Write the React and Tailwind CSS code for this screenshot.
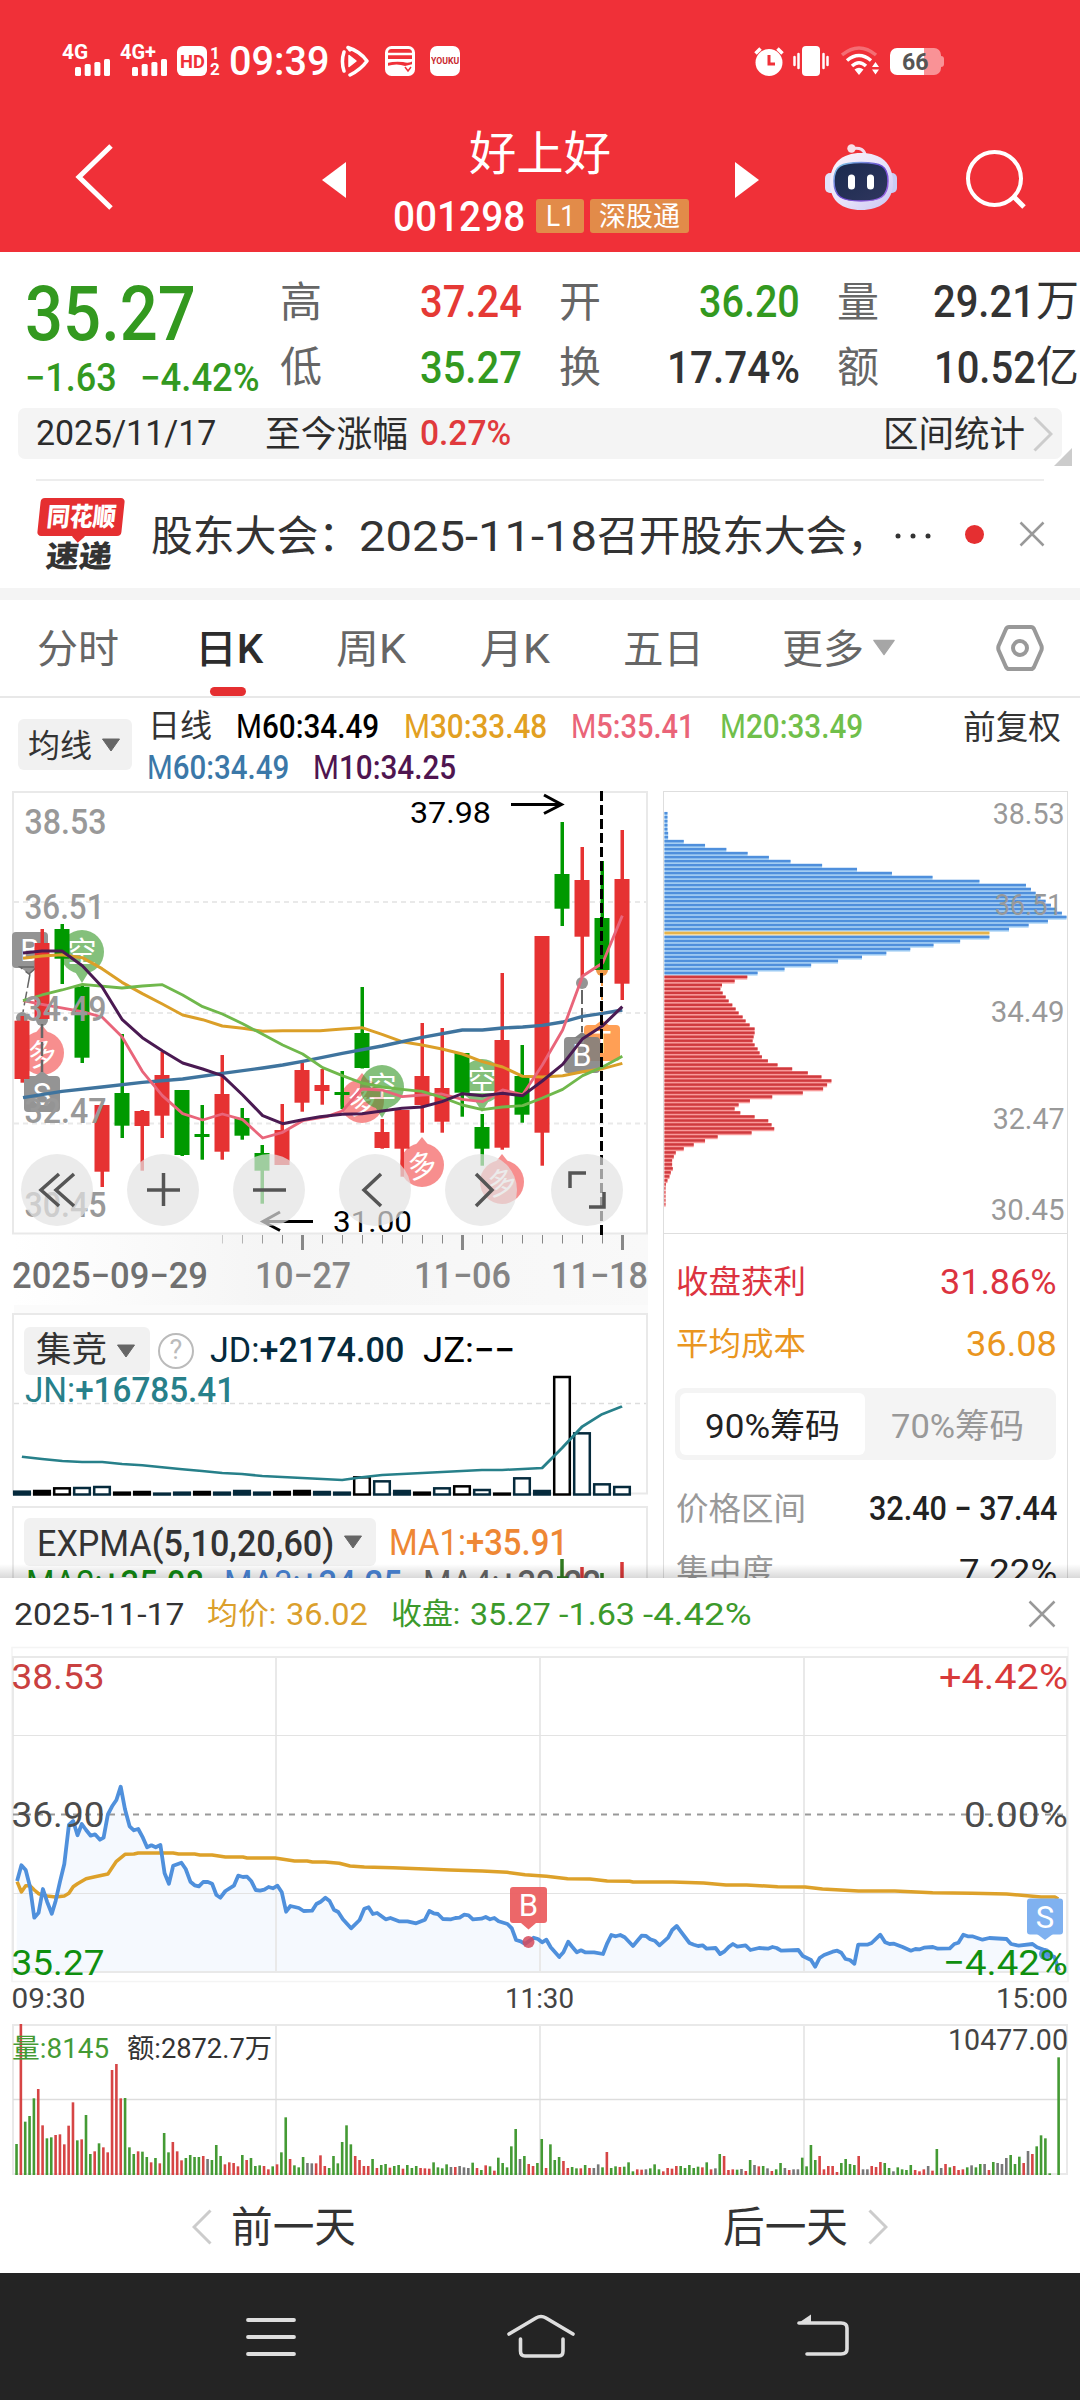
import { useLayoutEffect, useRef } from "react";

/* Text squeezed or widened horizontally to fill the width its class gives. */
function Fit({ className = "", children }) {
  const box = useRef(null);
  const ink = useRef(null);
  useLayoutEffect(() => {
    const k = box.current.clientWidth / ink.current.offsetWidth;
    ink.current.style.transform = `scaleX(${k})`;
  }, []);
  return (
    <span ref={box} className={`block shrink-0 whitespace-nowrap leading-none ${className}`}>
      <span ref={ink} className="inline-block origin-left">{children}</span>
    </span>
  );
}

/* A thin indicator name followed by its stronger figure. */
function Reading({ className = "", name, value }) {
  return (
    <Fit className={className}>{name}<span className="font-medium">{value}</span></Fit>
  );
}

function Txt({ x, y, w, s = 35, fill = "#999", weight = 400, end = false, children }) {
  return (
    <text x={x} y={y} fontSize={s} fill={fill} fontWeight={weight} textLength={w} lengthAdjust="spacingAndGlyphs" textAnchor={end ? "end" : "start"}>
      {children}
    </text>
  );
}

function Caret({ className = "" }) {
  return (
    <svg viewBox="0 0 20 14" className={`shrink-0 ${className}`}>
      <path d="M1.500 1H18.500L10 13Z" fill="currentColor" stroke="currentColor" strokeWidth="1" strokeLinejoin="round" />
    </svg>
  );
}

function Signal() {
  return (
    <svg viewBox="0 0 36 17" className="h-[17px] w-[36px]" fill="#fff">
      <rect x="0" y="8" width="6" height="9" rx="1.500" />
      <rect x="9.700" y="5" width="6" height="12" rx="1.500" />
      <rect x="19.400" y="3" width="6" height="14" rx="1.500" />
      <rect x="29" y="0" width="6" height="17" rx="1.500" />
    </svg>
  );
}

function StatusBar() {
  return (
    <div className="flex h-[120px] items-start pl-[62px] pt-[42px] text-white">
      <div className="flex w-[58px] flex-col">
        <Fit className="w-[26px] text-[20px] font-bold">4G</Fit>
        <div className="-mt-[3px] ml-[13px]"><Signal /></div>
      </div>
      <div className="flex w-[57px] flex-col">
        <Fit className="w-[36px] text-[20px] font-bold">4G+</Fit>
        <div className="-mt-[3px] ml-[12px]"><Signal /></div>
      </div>
      <div className="mt-[4px] flex h-[30px] w-[30px] items-center justify-center rounded-[6px] bg-white text-[#f03038]">
        <Fit className="w-[25px] text-[19px] font-bold">HD</Fit>
      </div>
      <div className="ml-[2px] mt-[3px] flex w-[12px] flex-col items-center text-[17px] font-bold leading-[16px]">
        <span>1</span>
        <span>2</span>
      </div>
      <Fit className="ml-[8px] w-[100px] text-[40px] font-medium">09:39</Fit>
      <svg viewBox="0 0 30 32" className="ml-[11px] mt-[3px] h-[32px] w-[30px]" fill="none" stroke="#fff" strokeWidth="3.500" strokeLinecap="round" strokeLinejoin="round">
        <path d="M4 7C2 13 2 20 4 26M8 2.500C16 5 22 9 27 16C22 23 16 27 10 30M8 2.500L10 5" />
        <path d="M9 10.500L16 16L9 21.500Z" fill="#fff" strokeWidth="1.500" />
      </svg>
      <svg viewBox="0 0 30 30" className="ml-[15px] mt-[4px] h-[30px] w-[30px]" fill="none" stroke="#fff" strokeWidth="3">
        <rect x="1.500" y="1.500" width="27" height="27" rx="5" />
        <path d="M2 8H28" strokeWidth="2.500" />
        <path d="M2 13H28V15Q24 18 18 16Q10 15 2 17Z" fill="#fff" stroke="none" />
        <path d="M2 20Q12 17 20 20L28 18V28H3Z" fill="#fff" stroke="none" />
        <path d="M20 21L23 25L26 21" stroke="#f03038" strokeWidth="1.500" />
      </svg>
      <div className="ml-[15px] mt-[4px] flex h-[30px] w-[30px] items-center justify-center rounded-[7px] bg-white text-[#c9292f]">
        <Fit className="w-[28px] text-[9px] font-bold">YOUKU</Fit>
      </div>
      <svg viewBox="0 0 30 32" className="ml-[294px] mt-[3px] h-[32px] w-[30px]">
        <circle cx="15" cy="17.500" r="13.500" fill="#fff" />
        <path d="M1.500 8.500L6.500 3.500M28.500 8.500L23.500 3.500" stroke="#fff" strokeWidth="3.500" fill="none" />
        <path d="M15 10V19H21" stroke="#f03038" strokeWidth="3" fill="none" />
      </svg>
      <svg viewBox="0 0 36 32" className="ml-[9px] mt-[3px] h-[32px] w-[36px]" stroke="#fff" strokeWidth="2.500" strokeLinecap="round">
        <rect x="9" y="1" width="18" height="30" rx="4" fill="#fff" stroke="none" />
        <path d="M5.500 9V23M1.500 12V20M30.500 9V23M34.500 12V20" />
      </svg>
      <svg viewBox="0 0 40 30" className="ml-[12px] mt-[4px] h-[30px] w-[40px]" fill="none" stroke="#fff" strokeWidth="3.500">
        <path d="M1 9Q18 -5 35 9" opacity=".3" />
        <path d="M6 14.500Q18 4.500 30 14.500" />
        <path d="M11 20Q18 13.500 25 20" />
        <path d="M13.500 23.500Q18 20 22.500 23.500L18 29Z" fill="#fff" stroke="none" />
        <path d="M31 21L34.500 16L38 21ZM31 23.500L34.500 28.500L38 23.500Z" fill="#fff" stroke="none" />
      </svg>
      <div className="ml-[9px] mt-[6px] flex items-center">
        <div className="flex h-[27px] w-[51px] items-center justify-center rounded-[7px] bg-gradient-to-r from-white from-67% to-[#f99296] to-67%">
          <Fit className="w-[27px] text-[24px] font-bold text-[#555]">66</Fit>
        </div>
        <div className="h-[11px] w-[3px] rounded-r bg-[#f99296]" />
      </div>
    </div>
  );
}

function Robot() {
  return (
    <svg viewBox="0 0 74 70" className="h-[70px] w-[74px]">
      <defs>
        <linearGradient id="shell" x1="0" y1="0" x2="1" y2="1">
          <stop offset="0" stopColor="#fdf4fb" />
          <stop offset=".55" stopColor="#e6e2fa" />
          <stop offset="1" stopColor="#c9c4f2" />
        </linearGradient>
        <linearGradient id="visor" x1="0" y1="0" x2="1" y2="1">
          <stop offset="0" stopColor="#1a2a4e" />
          <stop offset="1" stopColor="#2f365e" />
        </linearGradient>
        <linearGradient id="rim" x1="0" y1="0" x2="1" y2="1">
          <stop offset="0" stopColor="#7fd6ea" />
          <stop offset=".5" stopColor="#6a46d0" />
          <stop offset="1" stopColor="#a56be8" />
        </linearGradient>
      </defs>
      <path d="M41 12Q40 4 29 5.500" fill="none" stroke="#f3dcee" strokeWidth="3" />
      <circle cx="27.500" cy="5.500" r="4.200" fill="#f8dfe8" />
      <rect x="1" y="30" width="11" height="20" rx="5" fill="#e2e2fa" />
      <rect x="62" y="30" width="11" height="20" rx="5" fill="#c9cdf4" />
      <path d="M37 10C57 10 69 20 69 40C69 58 56 67 37 67C18 67 6 58 6 40C6 20 18 10 37 10Z" fill="url(#shell)" />
      <path d="M37 19.500C57 19.500 64 23 64 38C64 54 56 58 37 58C18 58 10 54 10 38C10 23 17 19.500 37 19.500Z" fill="url(#visor)" stroke="url(#rim)" strokeWidth="1.500" />
      <rect x="24" y="31.500" width="7" height="15" rx="3.500" fill="#fff" />
      <rect x="43" y="31.500" width="7" height="15" rx="3.500" fill="#fff" />
    </svg>
  );
}

function Header() {
  return (
    <header className="h-[252px] bg-[#f03038]">
      <StatusBar />
      <div className="flex h-[132px] items-start text-white">
        <svg viewBox="0 0 40 70" className="ml-[75px] mt-[22px] h-[70px] w-[40px]" fill="none" stroke="#fff" strokeWidth="5">
          <path d="M36 4L4 35L36 66" />
        </svg>
        <svg viewBox="0 0 24 36" className="ml-[207px] mt-[42px] h-[36px] w-[24px]" fill="#fff"><path d="M24 0V36L0 18Z" /></svg>
        <div className="ml-[46px] flex w-[300px] flex-col">
          <Fit className="ml-[77px] mt-[10px] w-[142px] text-[47px]">好上好</Fit>
          <div className="mt-[20px] flex">
            <Fit className="ml-[1px] -mt-[1px] w-[132px] text-[42px] font-medium">001298</Fit>
            <div className="ml-[11px] mt-[2px] flex h-[34px] w-[48px] items-center justify-center rounded-[3px] bg-[#e28b49]">
              <Fit className="w-[29px] text-[29px]">L1</Fit>
            </div>
            <div className="ml-[6px] mt-[2px] flex h-[34px] w-[99px] items-center justify-center rounded-[3px] bg-[#e28b49]">
              <Fit className="mt-[2px] w-[81px] text-[27px]">深股通</Fit>
            </div>
          </div>
        </div>
        <svg viewBox="0 0 24 36" className="ml-[43px] mt-[42px] h-[36px] w-[24px]" fill="#fff"><path d="M0 0V36L24 18Z" /></svg>
        <div className="ml-[65px] mt-[23px]"><Robot /></div>
        <svg viewBox="0 0 62 62" className="ml-[67px] mt-[29px] h-[62px] w-[62px]" fill="none" stroke="#fff" strokeWidth="4">
          <circle cx="29.500" cy="29.500" r="26.500" />
          <path d="M48 47L59 58" strokeWidth="5" />
        </svg>
      </div>
    </header>
  );
}

function Quote() {
  return (
    <section className="flex h-[156px]">
      <div className="w-[280px] shrink-0 pl-[25px] pt-[24px] text-[#33991f]">
        <Fit className="w-[171px] text-[76px] font-medium">35.27</Fit>
        <div className="mt-[7px] flex">
          <Fit className="w-[92px] text-[38px] font-medium">−1.63</Fit>
          <Fit className="ml-[23px] w-[120px] text-[38px] font-medium">−4.42%</Fit>
        </div>
      </div>
      <div className="pt-[16px]">
        <div className="flex h-[66px] items-center">
          <Fit className="mt-[3px] w-[42px] text-[42px] text-[#666]">高</Fit>
          <Fit className="ml-[98px] w-[102px] text-[45px] font-medium text-[#e53935]">37.24</Fit>
          <Fit className="ml-[37px] mt-[3px] w-[42px] text-[42px] text-[#666]">开</Fit>
          <Fit className="ml-[98px] w-[101px] text-[45px] font-medium text-[#33991f]">36.20</Fit>
          <Fit className="ml-[37px] mt-[3px] w-[42px] text-[42px] text-[#666]">量</Fit>
          <Fit className="ml-[54px] w-[102px] text-[45px] font-medium text-[#333]">29.21</Fit>
          <Fit className="ml-[1px] w-[43px] text-[43px] text-[#333]">万</Fit>
        </div>
        <div className="flex h-[66px] items-center">
          <Fit className="mt-[1px] w-[42px] text-[42px] text-[#666]">低</Fit>
          <Fit className="ml-[98px] w-[102px] text-[45px] font-medium text-[#33991f]">35.27</Fit>
          <Fit className="ml-[37px] mt-[1px] w-[42px] text-[42px] text-[#666]">换</Fit>
          <Fit className="ml-[66px] w-[133px] text-[45px] font-medium text-[#333]">17.74%</Fit>
          <Fit className="ml-[37px] mt-[1px] w-[42px] text-[42px] text-[#666]">额</Fit>
          <Fit className="ml-[55px] w-[102px] text-[45px] font-medium text-[#333]">10.52</Fit>
          <Fit className="w-[43px] text-[43px] text-[#333]">亿</Fit>
        </div>
      </div>
    </section>
  );
}

function RangeBar() {
  return (
    <section className="relative h-[72px] px-[18px]">
      <div className="flex h-[51px] items-center rounded-[7px] bg-[#f4f4f4] pl-[18px] text-[#2c2c2c]">
        <Fit className="w-[180px] text-[35px]">2025/11/17</Fit>
        <Fit className="ml-[49px] mt-[2px] w-[143px] text-[36px]">至今涨幅</Fit>
        <Fit className="ml-[12px] w-[91px] text-[35px] font-medium text-[#e03a3c]">0.27%</Fit>
        <Fit className="ml-[372px] mt-[3px] w-[142px] text-[36px]">区间统计</Fit>
        <svg viewBox="0 0 20 36" className="ml-[8px] h-[36px] w-[20px]" fill="none" stroke="#ccc" strokeWidth="3"><path d="M1.500 1.500L18 18L1.500 34.500" /></svg>
      </div>
      <svg viewBox="0 0 18 18" className="absolute left-[1054px] top-[40px] h-[18px] w-[18px]"><path d="M18 0V18H0Z" fill="#ccc" /></svg>
      <div className="ml-[18px] mt-[20px] h-[2px] w-[1008px] bg-[#ededed]" />
    </section>
  );
}

function News() {
  return (
    <section className="flex h-[108px] items-center text-[#333]">
      <div className="ml-[37px] h-[72px] w-[90px]">
        <div className="relative ml-[2px] flex h-[38px] w-[84px] -skew-x-6 items-center justify-center rounded-[4px] bg-[#e52f31]">
          <Fit className="w-[69px] text-[26px] font-black text-white">同花顺</Fit>
          <div className="absolute left-[37px] top-[34px] h-[9px] w-[9px] rotate-45 bg-[#e52f31]" />
        </div>
        <div className="ml-[9px] mt-[6px] -skew-x-6"><Fit className="w-[66px] text-[30px] font-black">速递</Fit></div>
      </div>
      <Fit className="ml-[24px] mt-[6px] w-[209px] text-[42px]">股东大会：</Fit>
      <Fit className="-ml-[1px] mt-[5px] w-[238px] text-[42px]">2025-11-18</Fit>
      <Fit className="mt-[6px] w-[292px] text-[42px]">召开股东大会，</Fit>
      <svg viewBox="0 0 38 6" className="ml-[6px] mt-[3px] h-[6px] w-[38px]" fill="#333"><circle cx="3" cy="3" r="2.500" /><circle cx="18" cy="3" r="2.500" /><circle cx="33" cy="3" r="2.500" /></svg>
      <div className="ml-[32px] h-[19px] w-[19px] rounded-full bg-[#e52f31]" />
      <svg viewBox="0 0 26 26" className="ml-[35px] h-[26px] w-[26px]" stroke="#999" strokeWidth="2.500"><path d="M1.500 1.500L24.500 24.500M24.500 1.500L1.500 24.500" /></svg>
    </section>
  );
}

function Tabs() {
  return (
    <nav className="relative flex h-[98px] items-center border-b-2 border-[#e8e8e8] pt-[3px] text-[40px] text-[#666]">
      <Fit className="ml-[37px] w-[82px]">分时</Fit>
      <Fit className="ml-[76px] w-[68px] font-medium text-[#2c2c2c]">日K</Fit>
      <Fit className="ml-[73px] w-[70px]">周K</Fit>
      <Fit className="ml-[74px] w-[70px]">月K</Fit>
      <Fit className="ml-[73px] w-[81px]">五日</Fit>
      <Fit className="ml-[78px] w-[82px]">更多</Fit>
      <Caret className="-mt-[4px] ml-[8px] h-[19px] w-[24px] text-[#a6a6a6]" />
      <svg viewBox="0 0 48 46" className="-mt-[3px] ml-[100px] h-[46px] w-[48px]" fill="none" stroke="#999" strokeWidth="4" strokeLinejoin="round">
        <path d="M13 2H35Q37 2 38 4L45.500 21Q46 23 45.500 25L38 42Q37 44 35 44H13Q11 44 10 42L2.500 25Q2 23 2.500 21L10 4Q11 2 13 2Z" />
        <circle cx="24" cy="23" r="7" />
      </svg>
      <div className="absolute left-[210px] top-[87px] h-[9px] w-[36px] rounded-full bg-[#e52f31]" />
    </nav>
  );
}

function AverageRow() {
  return (
    <section className="flex h-[93px] text-[33px]">
      <div className="ml-[18px] mt-[21px] flex h-[51px] w-[114px] items-center rounded-[6px] bg-[#f1f1f1] text-[#333]">
        <Fit className="ml-[10px] mt-[3px] w-[64px] text-[32px]">均线</Fit>
        <Caret className="ml-[9px] h-[14px] w-[20px] text-[#666]" />
      </div>
      <div className="ml-[16px] w-[812px]">
        <div className="mt-[8px] flex h-[40px] items-center">
          <Fit className="w-[64px] text-[32px] text-[#333]">日线</Fit>
          <Reading className="ml-[24px] w-[143px] text-black" name="M" value="60:34.49" />
          <Reading className="ml-[25px] w-[143px] text-[#e2a022]" name="M" value="30:33.48" />
          <Reading className="ml-[24px] w-[123px] text-[#ea6478]" name="M" value="5:35.41" />
          <Reading className="ml-[26px] w-[143px] text-[#70bf4b]" name="M" value="20:33.49" />
        </div>
        <div className="flex h-[42px] items-center">
          <Reading className="-ml-[1px] w-[142px] text-[#3b78a8]" name="M" value="60:34.49" />
          <Reading className="ml-[24px] w-[143px] text-[#4f1550]" name="M" value="10:34.25" />
        </div>
      </div>
      <Fit className="ml-[3px] mt-[13px] w-[98px] text-[33px] text-[#333]">前复权</Fit>
    </section>
  );
}

/* colour, body top, body bottom, wick top, wick bottom */
const candles = [
  ["r", 1020.7, 1079, 1016, 1082.7], ["r", 943, 1019, 929, 1019], ["g", 929, 958.7, 924, 984], ["g", 986.7, 1057.7, 986, 1063],
  ["r", 1105, 1171.7, 1105, 1187], ["g", 1093, 1125.7, 1034, 1138], ["r", 1111, 1126, 1110, 1170.7], ["r", 1075, 1115.7, 1051.7, 1138],
  ["g", 1090, 1155, 1090, 1156], ["g", 1134, 1137, 1105, 1159.7], ["r", 1094, 1151.7, 1055, 1159.7], ["g", 1118, 1135.7, 1108, 1139.7],
  ["g", 1153, 1170.7, 1145, 1203.7], ["r", 1130, 1165, 1104, 1165], ["r", 1070, 1102.7, 1062.7, 1111.7], ["r", 1085, 1091, 1069, 1104.7],
  ["g", 1092, 1095, 1071, 1109], ["g", 1033, 1068, 987, 1068.5], ["r", 1132, 1148, 1119, 1148.7], ["r", 1110, 1148.7, 1110, 1176.7],
  ["r", 1076, 1105, 1023, 1132.7], ["r", 1088, 1121.7, 1028, 1132.7], ["g", 1053, 1092.7, 1053, 1116.7], ["g", 1127, 1148.7, 1114, 1165.7],
  ["r", 1040, 1147.7, 973, 1149.7], ["g", 1076, 1114.7, 1045, 1122.7], ["r", 936, 1132.7, 936, 1165.7], ["g", 874, 908.7, 822, 926],
  ["r", 880, 936.7, 847, 977], ["g", 918, 970, 861, 970], ["r", 879, 983.7, 830, 1000],
];

const averages = [
  ["#db9f28", 9, "69,535 126,528 186,524 247,533 306,566 366,607 427,641 487,672 548,705 608,719 667,738 728,745 788,754 848,752 960,752 1027,747 1086,743 1146,763 1206,785 1266,795 1326,807 1387,822 1447,845 1508,861 1568,889 1627,891 1688,887 1748,875 1808,866 1867,850"],
  ["#3f749e", 10, "69,953 186,934 306,921 427,907 548,897 667,880 788,864 848,855 908,844 1027,820 1146,798 1266,772 1387,750 1447,750 1508,744 1568,741 1627,736 1688,726 1748,709 1808,700 1867,690"],
  ["#e9657a", 8.5, "69,662 126,673 247,695 306,711 366,770 427,874 487,947 548,1001 608,1020 667,1002 728,1019 788,1074 848,1057 908,1022 980,1010 1027,993 1086,927 1146,930 1206,950 1266,945 1326,942 1387,958 1447,965 1508,930 1568,944 1627,855 1688,750 1748,588 1808,549 1867,407"],
  ["#70b84c", 8.5, "69,662 126,645 186,630 247,613 366,624 427,618 487,614 548,645 608,680 667,702 728,731 788,763 848,795 908,822 968,863 1027,887 1086,909 1146,921 1206,928 1266,934 1326,952 1387,975 1447,989 1508,981 1568,977 1627,954 1688,928 1748,887 1808,861 1867,829"],
  ["#4a1a52", 9, "69,519 126,513 186,513 247,557 306,620 366,718 427,773 487,812 548,849 608,867 667,887 728,945 788,1007 848,1031 908,1019 960,1010 1027,1003 1086,1001 1146,993 1206,985 1266,981 1326,965 1387,941 1447,947 1508,940 1568,947 1627,903 1688,853 1748,776 1808,737 1867,680"],
];

function Pin({ x, y, kind, down }) {
  const bull = kind === "多";
  return (
    <g opacity={bull ? 0.6 : 0.62}>
      <circle cx={x} cy={y} r="22" fill={bull ? "#f24444" : "#3a9a2c"} />
      <path d={down ? `M${x - 8} ${y + 18}L${x} ${y + 31}L${x + 8} ${y + 18}Z` : `M${x - 8} ${y - 18}L${x} ${y - 28}L${x + 8} ${y - 18}Z`} fill={bull ? "#f24444" : "#3a9a2c"} />
      <text x={x} y={y + 11} fontSize="29" fill="#fff" textAnchor="middle" transform={bull ? `rotate(-14 ${x} ${y})` : undefined}>{kind}</text>
    </g>
  );
}

function KLine() {
  return (
    <div className="relative h-[516px] w-[660px]">
      <svg viewBox="0 789 660 516" className="h-[516px] w-[660px]">
        <defs>
          <linearGradient id="fade" x1="0" x2="1">
            <stop offset="0" stopColor="#fff" />
            <stop offset=".4" stopColor="#f5f5f5" />
            <stop offset="1" stopColor="#f9f9f9" />
          </linearGradient>
        </defs>
        <rect x="14" y="1234" width="634" height="71" fill="url(#fade)" />
        <rect x="13" y="792" width="634" height="441.500" fill="#fff" stroke="#e9e9e9" strokeWidth="2" />
        <path d="M14 902H646M14 1013H646M14 1123.500H646" stroke="#e9e9e9" strokeWidth="2" strokeDasharray="5 4" />
        <g fontWeight="500" fontSize="35">
          <rect x="12" y="932" width="36" height="36" rx="4" fill="#949494" />
          <text x="30" y="961" fontSize="31" fill="#fff" textAnchor="middle" fontWeight="400">B</text>
          <path d="M20 967H37L29 974ZM30 974L23 1012" fill="#949494" stroke="#666" strokeWidth="1.500" strokeDasharray="14 4" />
          <circle cx="22" cy="1018" r="6" fill="#949494" />
          <circle cx="42" cy="1020" r="6" fill="#949494" />
        </g>
        <Pin x={82} y={952} kind="空" down />
        <Pin x={42} y={1053} kind="多" />
        <Pin x={362} y={1101} kind="多" />
        <Pin x={382} y={1087} kind="空" down />
        <Pin x={422} y={1165} kind="多" />
        <Pin x={482} y={1081} kind="空" down />
        <Pin x={502} y={1182} kind="多" />
        <rect x="24" y="1076" width="36" height="36" rx="4" fill="#949494" />
        <path d="M34 1077L42 1071L50 1077Z" fill="#949494" />
        <text x="42" y="1105" fontSize="31" fill="#fff" textAnchor="middle">S</text>
        <rect x="584" y="1025" width="36" height="36" rx="4" fill="#ff9f55" />
        <path d="M594 1026L602 1020L610 1026Z" fill="#ff9f55" />
        <text x="602" y="1053" fontSize="31" fill="#fff" textAnchor="middle">T</text>
        <circle cx="602" cy="970" r="6" fill="#f09a4a" />
        <path d="M602 976V1022" stroke="#f09a4a" strokeWidth="2" strokeDasharray="10 4" />
        {candles.map(([c, a, b, t, u], i) => (
          <g key={i} fill={c === "r" ? "#e63232" : "#009900"}>
            <rect x={14.500 + 20 * i} y={a} width="15" height={b - a} />
            <rect x={20.500 + 20 * i} y={t} width="3.500" height={u - t} />
          </g>
        ))}
        <path d="M42 1024V1072" stroke="#666" strokeWidth="2.500" strokeDasharray="14 4" />
        <rect x="564" y="1037" width="36" height="36" rx="4" fill="#808080" opacity=".88" />
        <path d="M574 1038L582 1032L590 1038Z" fill="#808080" />
        <text x="582" y="1066" fontSize="31" fill="#fff" textAnchor="middle">B</text>
        <circle cx="582" cy="983" r="6" fill="#949494" />
        <path d="M582 990V1032" stroke="#666" strokeWidth="2" strokeDasharray="14 4" />
        <g transform="translate(0 780) scale(.33333)" fill="none" strokeLinejoin="round">
          {averages.map(([c, w, p]) => <polyline key={c} points={p} stroke={c} strokeWidth={w} />)}
        </g>
        <Txt x={24.500} y={834} w={82} weight={500}>38.53</Txt>
        <Txt x={24.500} y={919} w={80} weight={500}>36.51</Txt>
        <Txt x={24.500} y={1021} w={82} weight={500}>34.49</Txt>
        <Txt x={24.500} y={1123} w={82} weight={500}>32.47</Txt>
        <Txt x={24.500} y={1217} w={82} weight={500}>30.45</Txt>
        <Txt x={410} y={823} w={81} s={30} fill="#000">37.98</Txt>
        <Txt x={333} y={1232} w={79} s={30} fill="#000">31.00</Txt>
        <path d="M511 804.500H561M544 795L561.500 804.500L544 813.500M313 1221.500H263M280 1212L263 1221.500L280 1230.500" fill="none" stroke="#000" strokeWidth="3" />
        <path d="M601.500 791V1235" stroke="#000" strokeWidth="3" strokeDasharray="10 4" />
        {Array.from({ length: 21 }, (_, i) => (
          <path key={i} d={i % 8 === 4 ? `M${222.500 + 20 * i} 1235V1250` : `M${222.500 + 20 * i} 1235V1243.500`} stroke="#888" strokeWidth={i % 8 === 4 ? 3 : 1} opacity={Math.min(1, 0.4 + i * 0.2)} />
        ))}
        <Txt x={12} y={1288} w={196} s={36} fill="#707070" weight={500}>2025−09−29</Txt>
        <Txt x={255} y={1288} w={96} s={36} fill="#858585" weight={500}>10−27</Txt>
        <Txt x={414} y={1288} w={97} s={36} fill="#858585" weight={500}>11−06</Txt>
        <Txt x={551} y={1288} w={97} s={36} fill="#858585" weight={500}>11−18</Txt>
      </svg>
      <div className="absolute left-[21px] top-[365px] flex gap-[34px]">
        {["M38 20L20 36L38 52M53 20L35 36L53 52", "M20 36H53M36.500 19V52", "M20 36H53", "M42 20L25 36L42 52", "M31 20L47 36L31 52", "M19 34V19H35M38 53H53V38"].map((d) => (
          <svg key={d} viewBox="0 0 72 72" className="h-[72px] w-[72px] rounded-full bg-[#e3e3e3]/70" fill="none" stroke="#555" strokeWidth="3.500"><path d={d} /></svg>
        ))}
      </div>
    </div>
  );
}

/* top edge, colour (n navy, k black), h when the bar is hollow */
const auction = "812n 810k 802kh 801nh 798nh 815k 813k 818n 815n 813k 815n 810n 815n 813k 810k 813n 815n 769kh 781nh 810n 815k 802nh 796kh 807nh 818k 772nh 810n 468kh 637nh 790nh 798nh".split(" ");

function Auction() {
  return (
    <div className="relative h-[201px] w-[660px]">
      <svg viewBox="0 1305 660 201" className="absolute inset-0 h-[201px] w-[660px]">
        <rect x="14" y="1305" width="634" height="9" fill="#fbfbfb" />
        <rect x="13" y="1314" width="634" height="179.500" fill="#fff" stroke="#e9e9e9" strokeWidth="2" />
        <path d="M14 1403.500H646" stroke="#ddd" strokeWidth="1.500" strokeDasharray="5 4" />
        {auction.map((b, i) => {
          const top = 1220 + parseInt(b) / 3;
          const c = b.includes("k") ? "#000" : "#052a3c";
          return <rect key={i} x={14.200 + 20 * i} y={top + 1} width="15.600" height={Math.max(1493.500 - top, 0.500)} fill={b.includes("h") ? "#fff" : c} stroke={c} strokeWidth="2.500" />;
        })}
        <g transform="translate(0 1220) scale(.42088 .33333)">
          <polyline points="52,710 100,717 148,723 195,726 243,726 290,732 338,736 385,742 433,748 480,753 528,759 575,762 623,768 718,774 813,780 860,772 908,765 1003,759 1145,750 1193,750 1288,744 1336,683 1383,620 1430,583 1478,559" fill="none" stroke="#27808a" strokeWidth="7.500" />
        </g>
      </svg>
      <div className="relative flex h-[48px] items-center pl-[24px] pt-[43px] text-[35px]">
        <div className="flex h-[48px] w-[126px] shrink-0 items-center rounded-[6px] bg-[#f1f1f1]">
          <Fit className="ml-[12px] w-[71px] text-[35px] text-[#333]">集竞</Fit>
          <Caret className="ml-[9px] h-[14px] w-[20px] text-[#666]" />
        </div>
        <div className="ml-[8px] flex h-[36px] w-[36px] shrink-0 items-center justify-center rounded-full border-[2.500px] border-[#bbb] text-[27px] leading-none text-[#bbb]">?</div>
        <Reading className="ml-[16px] w-[194px] text-[#052a3c]" name="JD:" value="+2174.00" />
        <Reading className="ml-[19px] w-[92px] text-black" name="JZ:" value="−−" />
      </div>
      <Reading className="relative ml-[25px] mt-[20px] w-[210px] text-[35px] text-[#27808a]" name="JN:" value="+16785.41" />
    </div>
  );
}

function Expma() {
  return (
    <div className="relative h-[130px] w-[660px]">
      <div className="ml-[12px] h-[130px] w-[636px] border-2 border-[#e9e9e9]" />
      <div className="absolute inset-0 pl-[24px] pt-[12px]">
        <div className="flex items-center">
          <div className="flex h-[48px] w-[352px] items-center rounded-[6px] bg-[#f1f1f1]">
            <Reading className="ml-[13px] mt-[2px] w-[297px] text-[37px] text-[#333]" name="EXPMA" value="(5,10,20,60)" />
            <Caret className="ml-[9px] h-[14px] w-[20px] text-[#666]" />
          </div>
          <Reading className="ml-[13px] mt-[2px] w-[179px] text-[36px] text-[#ee8734]" name="MA1:" value="+35.91" />
        </div>
        <div className="flex text-[36px]">
          <Reading className="ml-[2px] w-[178px] text-[#138a13]" name="MA2:" value="+35.08" />
          <Reading className="ml-[20px] w-[178px] text-[#4a86d8]" name="MA3:" value="+34.25" />
          <Reading className="ml-[21px] w-[178px] text-[#666]" name="MA4:" value="+32.22" />
        </div>
      </div>
      <svg viewBox="0 1506 660 80" className="absolute left-0 top-0 h-[80px] w-[660px]" strokeWidth="3.500">
        <path d="M562 1559V1580M602 1573V1580M557 1578H568" stroke="#2f7a1f" />
        <path d="M582 1567V1580M622 1562V1580" stroke="#d93838" />
      </svg>
    </div>
  );
}

const chips = [
  50, 50, 50, 50, 50, 52, 52, 99, 163, 227, 291, 355, 420, 515, 620, 725, 847, 988, 1128, 1143, 1157, 1172, 1187, 1203, 1220, 1236, 1250,
  1194, 1136, 1077, 1018, 1018, 930, 850, 780, 708, 635, 563, 482, 402, 321, 290, 252, 214, 209, 216, 225, 234, 245, 255, 264, 276, 285,
  297, 312, 312, 309, 306, 312, 321, 327, 334, 352, 381, 425, 472, 513, 543, 530, 518, 457, 365, 298, 264, 252, 269, 312, 353, 363, 371,
  303, 201, 163, 129, 99, 75, 69, 64, 64, 66, 60, 56, 50, 45, 44, 44, 44, 44, 44,
];

function ChipPanel() {
  return (
    <div className="ml-[3px] mt-[2px] h-[800px] w-[405px] border border-[#dedede]">
      <svg viewBox="664 791 403 442" className="h-[442px] w-[403px] border-b border-[#dedede]">
        {chips.map((v, i) => {
          const y = 811 + 4 * i;
          const w = (v - 41) / 3;
          const tint = i > 40 ? "#f89a9a" : i === 30 ? "#fbe3ae" : "#a8d2f5";
          const c = i > 40 ? "#d03a3e" : i === 30 ? "#e6b34c" : "#4f8fdc";
          return (
            <g key={i}>
              <rect x="664" y={y} width={w} height="4" fill={tint} />
              <rect x="664" y={y} width={w} height="2.500" fill={c} />
            </g>
          );
        })}
        <Txt x={1065} y={823.500} w={72} s={29} end>38.53</Txt>
        <Txt x={1063} y={914.500} w={68} s={29} end>36.51</Txt>
        <Txt x={1065} y={1021.500} w={74} s={29} end>34.49</Txt>
        <Txt x={1065} y={1128.500} w={72} s={29} end>32.47</Txt>
        <Txt x={1065} y={1219.500} w={74} s={29} end>30.45</Txt>
      </svg>
      <div className="flex h-[62px] items-center justify-between pl-[12px] pr-[10px] pt-[34px] text-[#dc3340]">
        <Fit className="w-[130px] text-[32px]">收盘获利</Fit>
        <Fit className="w-[117px] text-[35px]">31.86%</Fit>
      </div>
      <div className="flex h-[62px] items-center justify-between pl-[12px] pr-[10px] pt-[34px] text-[#ea961f]">
        <Fit className="w-[130px] text-[32px]">平均成本</Fit>
        <Fit className="w-[91px] text-[35px]">36.08</Fit>
      </div>
      <div className="ml-[11px] mt-[30px] flex h-[72px] w-[381px] items-center rounded-[9px] bg-[#f4f4f4] p-[5px]">
        <div className="flex h-[62px] w-[185px] items-center justify-center rounded-[6px] bg-white pt-[4px] text-[#222]">
          <Fit className="w-[135px] text-[34px]">90%筹码</Fit>
        </div>
        <div className="flex h-[62px] w-[185px] items-center justify-center pt-[4px] text-[#999]">
          <Fit className="w-[133px] text-[34px]">70%筹码</Fit>
        </div>
      </div>
      <div className="mt-[17px] flex h-[62px] items-center justify-between pl-[12px] pr-[10px] pt-[1px]">
        <Fit className="w-[130px] text-[32px] text-[#999]">价格区间</Fit>
        <Fit className="w-[188px] text-[33px] font-medium text-[#222]">32.40 − 37.44</Fit>
      </div>
      <div className="flex h-[62px] items-center justify-between pl-[12px] pr-[10px] pt-[1px]">
        <Fit className="w-[98px] text-[32px] text-[#999]">集中度</Fit>
        <Fit className="w-[98px] text-[34px] text-[#222]">7.22%</Fit>
      </div>
    </div>
  );
}

const morning = "48,903 60,856 72,870 84,920 96,1013 108,998 120,927 132,965 145,1001 156,962 168,905 180,852 193,735 205,723 217,766 229,732 241,750 254,767 266,763 280,779 290,773 302,703 314,679 326,660 338,620 350,688 363,739 375,751 387,747 400,773 412,802 424,796 436,802 449,795 461,880 473,911 485,857 508,848 520,867 533,905 545,916 557,919 569,906 582,906 594,911 606,945 617,953 631,933 655,917 667,887 680,891 692,890 704,904 716,930 728,932 740,929 752,921 764,925 777,917 789,937 801,995 813,978 837,984 850,993 874,992 886,972 898,965 911,953 923,963 935,989 947,996 960,1018 983,1045 1007,1020 1020,986 1032,982 1044,1002 1056,999 1080,1018 1093,1014 1117,1024 1141,1024 1165,1030 1190,1019 1202,993 1214,1000 1226,1002 1240,1017 1263,1018 1275,1014 1287,1013 1300,1004 1312,1006 1324,1018 1348,1016 1360,1011 1372,1018 1384,1014 1396,1024 1421,1032 1433,1045 1445,1080 1458,1084 1470,1092 1494,1073 1506,1077 1518,1087 1530,1079 1542,1102 1566,1131";
const afternoon = "20,1082 32,1102 56,1130 68,1117 82,1085 94,1101 107,1117 119,1111 131,1117 157,1117 183,1122 195,1090 207,1065 220,1069 233,1065 246,1072 270,1098 295,1067 308,1068 320,1078 333,1082 347,1096 372,1073 384,1050 397,1038 409,1055 434,1089 447,1094 459,1098 472,1096 484,1106 510,1104 523,1122 536,1114 548,1101 560,1092 573,1100 597,1096 611,1110 636,1104 662,1106 675,1101 687,1104 700,1112 750,1110 763,1128 787,1140 799,1160 812,1134 825,1125 850,1115 863,1112 875,1118 887,1137 900,1140 913,1151 924,1094 950,1094 963,1089 988,1064 1002,1087 1015,1092 1028,1091 1053,1101 1077,1112 1090,1107 1103,1108 1115,1103 1141,1101 1155,1106 1190,1105 1203,1092 1215,1088 1229,1064 1242,1069 1255,1069 1285,1079 1305,1074 1355,1077 1368,1092 1390,1097 1430,1092 1443,1102 1465,1110 1478,1125 1493,1130 1507,1172";
const avgMorning = "48,905 60,936 72,917 84,917 96,930 108,941 132,948 156,951 180,948 193,940 205,920 217,911 241,896 266,890 302,882 326,844 350,823 375,822 387,819 485,819 500,822 545,822 560,825 594,825 631,831 680,831 692,834 770,834 825,843 860,843 875,846 910,846 950,850 980,858 1020,861 1100,863 1190,867 1260,870 1350,873 1420,877 1470,884 1530,889";
const avgAfternoon = "0,887 80,896 145,897 195,903 260,904 270,906 385,906 475,909 540,915 600,915 690,920 770,921 820,927 925,933 1030,933 1140,938 1255,940 1355,942 1455,951 1495,951 1505,957";

const toPage = (points, x0, kx) =>
  points.split(" ").map((p) => {
    const [x, y] = p.split(",").map(Number);
    return `${(x0 + x / kx).toFixed(1)},${(1580 + y / 3).toFixed(1)}`;
  });
const price = [...toPage(morning, 0, 2.8), ...toPage(afternoon, 540, 2.9037).slice(2)];
const average = [...toPage(avgMorning, 0, 2.8), ...toPage(avgAfternoon, 540, 2.9037).slice(1)];

function Minute() {
  return (
    <svg viewBox="0 1645 1080 375" className="block h-[375px] w-[1080px]">
      <rect x="12" y="1647.500" width="1056" height="334" fill="none" stroke="#f4f4f4" strokeWidth="1.500" />
      <polygon points={`16.500,1972 ${price.join(" ")} 1059,1972`} fill="#f5f9fe" />
      <path d="M13 1657H1067V1972H13ZM276 1657V1972M540 1657V1972M804 1657V1972" fill="none" stroke="#e9e9e9" strokeWidth="2" />
      <path d="M13 1735.500H1067M13 1893.500H1067" stroke="#e3e3e3" strokeWidth="1" />
      <path d="M13 1814.500H1067" stroke="#999" strokeWidth="2" strokeDasharray="6 6" />
      <polyline points={average.join(" ")} fill="none" stroke="#dda12a" strokeWidth="3.500" strokeLinejoin="round" />
      <polyline points={price.join(" ")} fill="none" stroke="#4f90dc" strokeWidth="3.800" strokeLinejoin="round" />
      <circle cx="528.500" cy="1942" r="6" fill="#d44a5c" opacity=".85" />
      <g fill="#ec5f62" opacity=".95"><rect x="510" y="1887" width="37" height="36" rx="3" /><path d="M521 1923H536L528.500 1929.500Z" /></g>
      <text x="528.500" y="1916" fontSize="31" fill="#fff" textAnchor="middle">B</text>
      <circle cx="1045" cy="1954" r="6" fill="#4f90dc" opacity=".9" />
      <g fill="#7fb1f0"><rect x="1027" y="1898.500" width="36" height="36" rx="3" /><path d="M1037 1934H1053L1045 1940Z" /></g>
      <text x="1045" y="1928" fontSize="31" fill="#fff" textAnchor="middle">S</text>
      <Txt x={11.500} y={1689} w={93} s={35.500} fill="#c94040">38.53</Txt>
      <Txt x={11.500} y={1827} w={93} s={35.500} fill="#4c4c4c">36.90</Txt>
      <Txt x={11.500} y={1975} w={93} s={35.500} fill="#0f8f0f">35.27</Txt>
      <Txt x={1068} y={1689} w={129} s={35.500} fill="#d83a3a" end>+4.42%</Txt>
      <Txt x={1068} y={1827} w={104} s={35.500} fill="#4c4c4c" end>0.00%</Txt>
      <Txt x={1068} y={1975} w={125} s={35.500} fill="#0f8f0f" end>−4.42%</Txt>
      <Txt x={11.500} y={2007.500} w={74} s={28} fill="#444">09:30</Txt>
      <Txt x={505} y={2007.500} w={69} s={28} fill="#444">11:30</Txt>
      <Txt x={1068} y={2007.500} w={72} s={28} fill="#444" end>15:00</Txt>
    </svg>
  );
}

/* start position, then the top edge and colour of each minute's bar (k grey) */
const volume = [
  [24, "402g 42r 335g 318g 265g 237r 346r 385g 382g 375r 373r 403r 347r 277r 391g 388r 315g 432g 424r 400g 412r 427r 180r 162r 265r 264g 412g 432g 424r 425g 441g 457r 444g 460r 369g 427g 396r 424r 451r 444g 435g 441g 441g 438r 447k 450g 405g 438g 463r 457r 459r 469r 435g 450r 444g 468g 466g 468r 478r 469g 463r 427g 322g 447r 466g 472g 441g 459k 460k 460r 436r 468r 474g 438g 460g 396g 346g 403g 438r 450r 468r 468r 447g 474r 465g 462g 473r 468g 465g 476r 465g"],
  [598, "474g 468g 474r 475r 476r 457g 472g 475g 463g 471k 471r 468k 472k 474k 458g 474r 480g 466r 469g 482r"],
  [723.5, "443g 459g 472g 409g 357g 447k 438g 462r 468r 459g 387g 474r 403g 450g 441g 453r 474r 471g 475g 475r 465g 474r 474k 463k 472g 426r 474g 469g 471r 470g 457g 484g 478r 479r 478k 475g 463g 478g 484r 474r 476r 468r 468g 474g 465g 474g 470g 472r 457g 478r 475k 432g 438r 480r 478r 479g 477k 483r 450g 465k 469r 468g 475k 483r 478g 459g 474k 480r 478k 478k 443g 469g 405g 450g 438r 478r 468r 468r 486r 459g 447g 462g 465g 438r 478k 478k 468r 471r 456r 459g 474g 484k 472g 478g 480g 465g 480r 484r 478r 468k 482r 417g 474k 462r 472g 468r 480r 478r 472g 466k 472g 462g 462k 480r 456g 459k 462k 444k 435g 462g 440g 459r 423k 432r 409g 376g 385g 490g"],
  [1537, "142g"],
];

function Volume() {
  return (
    <svg viewBox="0 2020 1080 160" className="block h-[160px] w-[1080px]">
      <path d="M13 2025H1067V2174H13ZM276 2025V2174M540 2025V2174M804 2025V2174" fill="none" stroke="#e9e9e9" strokeWidth="2" />
      <path d="M13 2099.500H1067" stroke="#ddd" strokeWidth="1.500" />
      {volume.map(([x0, bars]) =>
        bars.split(" ").map((b, i) => {
          const top = 2010 + parseInt(b) / 3;
          const c = b.endsWith("r") ? "#d64545" : b.endsWith("g") ? "#449a34" : "#777";
          return <rect key={`${x0}-${i}`} x={(x0 + 6.304 * i) / 1.4519 - 1.300} y={top} width="2.600" height={2175 - top} fill={c} />;
        })
      )}
      <Txt x={12} y={2058} w={97} s={27.500} fill="#449a34">量:8145</Txt>
      <Txt x={127} y={2058} w={145} s={27.500} fill="#333">额:2872.7万</Txt>
      <Txt x={1068} y={2050} w={120} s={29} fill="#444" end>10477.00</Txt>
    </svg>
  );
}

function Sheet() {
  return (
    <section className="h-[695px] bg-white">
      <div className="flex h-[67px] items-center pt-[5px] text-[31px]">
        <Fit className="ml-[14px] w-[171px] text-[#333]">2025-11-17</Fit>
        <Fit className="ml-[22px] w-[69px] text-[30px] text-[#dba02c]">均价:</Fit>
        <Fit className="ml-[10px] w-[82px] text-[#dba02c]">36.02</Fit>
        <Fit className="ml-[23px] w-[69px] text-[30px] text-[#3c9a2b]">收盘:</Fit>
        <Fit className="ml-[10px] w-[81px] text-[#3c9a2b]">35.27</Fit>
        <Fit className="ml-[8px] w-[76px] text-[#3c9a2b]">-1.63</Fit>
        <Fit className="ml-[8px] w-[109px] text-[#3c9a2b]">-4.42%</Fit>
        <svg viewBox="0 0 28 28" className="ml-[276px] h-[28px] w-[28px]" stroke="#999" strokeWidth="2.500"><path d="M1.500 1.500L26.500 26.500M26.500 1.500L1.500 26.500" /></svg>
      </div>
      <Minute />
      <Volume />
      <div className="flex h-[93px] items-center text-[42px] text-[#333]">
        <svg viewBox="0 0 20 36" className="ml-[192px] h-[36px] w-[20px]" fill="none" stroke="#ccc" strokeWidth="3"><path d="M18.500 1.500L2 18L18.500 34.500" /></svg>
        <Fit className="ml-[19px] mt-[3px] w-[125px]">前一天</Fit>
        <Fit className="ml-[367px] mt-[3px] w-[125px]">后一天</Fit>
        <svg viewBox="0 0 20 36" className="ml-[20px] h-[36px] w-[20px]" fill="none" stroke="#ccc" strokeWidth="3"><path d="M1.500 1.500L18 18L1.500 34.500" /></svg>
      </div>
    </section>
  );
}

function NavBar() {
  return (
    <footer className="flex h-[127px] items-start bg-[#242424] pt-[40px]">
      <svg viewBox="0 0 52 44" className="ml-[245px] h-[44px] w-[52px]" stroke="#dedede" strokeWidth="3.800" strokeLinecap="round"><path d="M3 7H49M3 24H49M3 41H49" /></svg>
      <svg viewBox="0 0 70 48" className="ml-[209px] h-[48px] w-[70px]" fill="none" stroke="#dedede" strokeWidth="3.600" strokeLinecap="round" strokeLinejoin="round">
        <path d="M3 21L30 5Q35 2 40 5L67 21M14.500 26V38Q14.500 43 19 43H53Q57 43 57 38V26" />
      </svg>
      <svg viewBox="0 0 56 46" className="ml-[221px] h-[46px] w-[56px]" fill="none" stroke="#dedede" strokeWidth="3.600">
        <path d="M2 10H44Q50 10 50 15V36Q50 41 44 41H10" strokeLinecap="round" />
        <path d="M0 11L14 1.500V10Z" fill="#dedede" stroke="none" />
      </svg>
    </footer>
  );
}

export default function App() {
  return (
    <div className="h-[2400px] w-[1080px] overflow-hidden bg-white font-[Roboto,'Noto_Sans_CJK_SC',sans-serif]">
      <Header />
      <Quote />
      <RangeBar />
      <News />
      <div className="h-[12px] bg-[#f4f4f4]" />
      <Tabs />
      <AverageRow />
      <div className="relative -mt-[4px] flex h-[791px] overflow-hidden">
        <div className="w-[660px] shrink-0 pt-[2px]">
          <KLine />
          <Auction />
          <Expma />
        </div>
        <div className="pt-[2px]"><ChipPanel /></div>
        <div className="absolute inset-x-0 bottom-0 h-[14px] bg-gradient-to-b from-transparent to-black/15" />
      </div>
      <Sheet />
      <NavBar />
    </div>
  );
}
